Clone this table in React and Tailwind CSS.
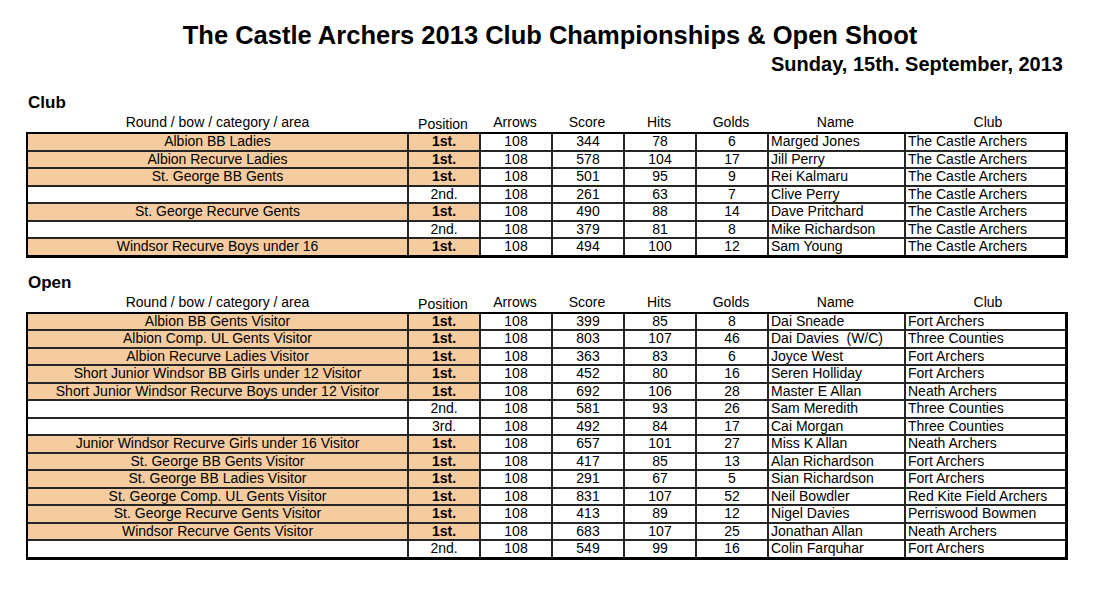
import React from 'react';

const cols = 'grid grid-cols-[379px_72px_72px_72px_72px_72px_137px_1fr]';
const headers = ['Round / bow / category / area', 'Position', 'Arrows', 'Score', 'Hits', 'Golds', 'Name', 'Club'];

const clubRows = [
    ['Albion BB Ladies', '1st.', 108, 344, 78, 6, 'Marged Jones', 'The Castle Archers'],
    ['Albion Recurve Ladies', '1st.', 108, 578, 104, 17, 'Jill Perry', 'The Castle Archers'],
    ['St. George BB Gents', '1st.', 108, 501, 95, 9, 'Rei Kalmaru', 'The Castle Archers'],
    ['', '2nd.', 108, 261, 63, 7, 'Clive Perry', 'The Castle Archers'],
    ['St. George Recurve Gents', '1st.', 108, 490, 88, 14, 'Dave Pritchard', 'The Castle Archers'],
    ['', '2nd.', 108, 379, 81, 8, 'Mike Richardson', 'The Castle Archers'],
    ['Windsor Recurve Boys under 16', '1st.', 108, 494, 100, 12, 'Sam Young', 'The Castle Archers'],
];

const openRows = [
    ['Albion BB Gents Visitor', '1st.', 108, 399, 85, 8, 'Dai Sneade', 'Fort Archers'],
    ['Albion Comp. UL Gents Visitor', '1st.', 108, 803, 107, 46, 'Dai Davies\u00a0 (W/C)', 'Three Counties'],
    ['Albion Recurve Ladies Visitor', '1st.', 108, 363, 83, 6, 'Joyce West', 'Fort Archers'],
    ['Short Junior Windsor BB Girls under 12 Visitor', '1st.', 108, 452, 80, 16, 'Seren Holliday', 'Fort Archers'],
    ['Short Junior Windsor Recurve Boys under 12 Visitor', '1st.', 108, 692, 106, 28, 'Master E Allan', 'Neath Archers'],
    ['', '2nd.', 108, 581, 93, 26, 'Sam Meredith', 'Three Counties'],
    ['', '3rd.', 108, 492, 84, 17, 'Cai Morgan', 'Three Counties'],
    ['Junior Windsor Recurve Girls under 16 Visitor', '1st.', 108, 657, 101, 27, 'Miss K Allan', 'Neath Archers'],
    ['St. George BB Gents Visitor', '1st.', 108, 417, 85, 13, 'Alan Richardson', 'Fort Archers'],
    ['St. George BB Ladies Visitor', '1st.', 108, 291, 67, 5, 'Sian Richardson', 'Fort Archers'],
    ['St. George Comp. UL Gents Visitor', '1st.', 108, 831, 107, 52, 'Neil Bowdler', 'Red Kite Field Archers'],
    ['St. George Recurve Gents Visitor', '1st.', 108, 413, 89, 12, 'Nigel Davies', 'Perriswood Bowmen'],
    ['Windsor Recurve Gents Visitor', '1st.', 108, 683, 107, 25, 'Jonathan Allan', 'Neath Archers'],
    ['', '2nd.', 108, 549, 99, 16, 'Colin Farquhar', 'Fort Archers'],
];

const ResultRow = ({ row, first }) => {
    const [round, pos, arrows, score, hits, golds, name, club] = row;
    const winner = pos === '1st.';
    return (
        <div className={`${cols} h-[15.5px] leading-[15.5px] box-content ${first ? '' : 'border-t-2 border-[#262626]'}`}>
            <div className={`text-center whitespace-nowrap ${round ? 'bg-[#f4cca0]' : 'bg-white'}`}>{round}</div>
            <div className={`text-center border-l-2 border-[#262626] ${winner ? 'bg-[#f4cca0] font-bold' : ''}`}>{pos}</div>
            <div className="text-center border-l-2 border-[#262626]">{arrows}</div>
            <div className="text-center border-l-2 border-[#262626]">{score}</div>
            <div className="text-center border-l-2 border-[#262626]">{hits}</div>
            <div className="text-center border-l-2 border-[#262626]">{golds}</div>
            <div className="pl-[2px] border-l-2 border-[#262626] whitespace-nowrap">{name}</div>
            <div className="pl-[2px] border-l-2 border-[#262626] whitespace-nowrap">{club}</div>
        </div>
    );
};

const ResultsTable = ({ title, rows, className }) => (
    <section className={className}>
        <h2 className="pl-[28px] text-[17px] leading-[20px] font-bold">{title}</h2>
        <div className={`${cols} mt-[1px] px-[28px] leading-[16px]`}>
            {headers.map((h, i) => (
                <div key={i} className={`text-center ${h === 'Position' ? 'translate-y-[2px]' : ''}`}>{h}</div>
            ))}
        </div>
        <div className="mt-[2px] ml-[26px] w-[1042px] border-black border-t-2 border-l-2 border-r-[3px] border-b-[3px]">
            {rows.map((row, i) => (
                <ResultRow key={i} row={row} first={i === 0} />
            ))}
        </div>
    </section>
);

export default function App() {
    return (
        <div className="w-[1100px] h-[594px] bg-white text-black text-[14px] font-['Liberation_Sans',Arial,sans-serif] overflow-hidden">
            <h1 className="pt-[18px] text-center text-[25.5px] leading-[34px] font-bold">
                The Castle Archers 2013 Club Championships &amp; Open Shoot
            </h1>
            <p className="pr-[37px] text-right text-[20px] leading-[24px] font-bold">
                Sunday, 15th. September, 2013
            </p>
            <ResultsTable title="Club" rows={clubRows} className="mt-[17px]" />
            <ResultsTable title="Open" rows={openRows} className="mt-[15px]" />
        </div>
    );
}
